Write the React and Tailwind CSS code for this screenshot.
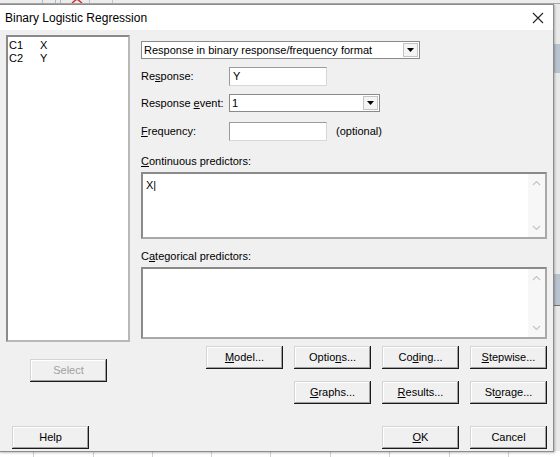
const font = "font-['Liberation_Sans',Arial,sans-serif]";

const raised =
  "shadow-[inset_-1px_-1px_#1a1a1a,inset_1px_1px_#d4d4d4,inset_-2px_-2px_#a0a0a0,inset_2px_2px_#ffffff]";

function Button({ children, disabled, className = "" }) {
  return (
    <div
      className={`flex h-[23px] w-[77px] items-center justify-center bg-[#f0f0f0] text-[11px] ${raised} ${
        disabled ? "text-[#a0a0a0]" : "text-black"
      } ${className}`}
    >
      {children}
    </div>
  );
}

function Arrow() {
  return (
    <div className="flex h-[14px] w-[15px] items-center justify-center border border-[#c4c4c4] bg-[#f4f4f4]">
      <svg width="7" height="4" viewBox="0 0 7 4">
        <path d="M0 0h7L3.5 4z" fill="#000" />
      </svg>
    </div>
  );
}

function Combo({ value, width }) {
  return (
    <div
      className={`flex h-[18px] items-center justify-between border border-[#8a8a8a] bg-white pl-[2px] pr-[1px] text-[11px] ${width}`}
    >
      <span>{value}</span>
      <Arrow />
    </div>
  );
}

function TextBox({ value }) {
  return (
    <div className="flex h-[19px] w-[98px] items-center border border-[#9a9a9a] border-b-[#d8d8d8] border-r-[#d8d8d8] bg-white pl-[3px] text-[11px]">
      {value}
    </div>
  );
}

function Chevron({ up }) {
  return (
    <svg width="9" height="6" viewBox="0 0 9 6">
      <path
        d={up ? "M1 5l3.5-3.5L8 5" : "M1 1l3.5 3.5L8 1"}
        fill="none"
        stroke="#c4c4c4"
        strokeWidth="1.2"
      />
    </svg>
  );
}

function Area({ height, children }) {
  return (
    <div
      className={`flex border-2 border-[#8a8a8a] border-b-[#a8a8a8] border-r-[#a8a8a8] bg-white ${height}`}
    >
      <div className="flex-1 pl-[3px] pt-[3px] text-[11px]">{children}</div>
      <div className="flex w-[17px] flex-col items-center justify-between bg-[#f7f7f7] py-[6px]">
        <Chevron up />
        <Chevron />
      </div>
    </div>
  );
}

function Row({ label, children }) {
  return (
    <div className="flex items-center">
      <div className="w-[88px] text-[11px]">{label}</div>
      {children}
    </div>
  );
}

export default function App() {
  return (
    <div className={`relative h-[457px] w-[560px] overflow-hidden bg-[#e9e9e9] ${font}`}>
      {/* toolbar remnants above the dialog */}
      <div className="absolute left-0 top-0 flex h-[4px] w-full items-end border-b border-[#a8a8a8] bg-[#ececec]">
        <div className="ml-[42px] h-[4px] w-[14px] border-x border-[#b8b8b8]" />
        <div className="ml-[4px] h-[4px] w-px bg-[#b8b8b8]" />
        <svg className="ml-[10px]" width="12" height="4" viewBox="0 0 12 4">
          <path d="M1 4l5-4 5 4" fill="none" stroke="#d83030" strokeWidth="1.5" />
        </svg>
        <div className="ml-[6px] h-[4px] w-[24px] border-x border-[#c4c4c4]" />
      </div>

      {/* worksheet remnants on the right */}
      <div className="absolute right-0 top-[44px] h-[29px] w-[7px] bg-[#b9c3cf]" />
      <div className="absolute right-0 top-[274px] h-[31px] w-[7px] bg-[#b9c3cf]" />
      <div className="absolute right-0 top-[305px] h-px w-[7px] bg-[#707070]" />
      <div className="absolute bottom-0 left-0 flex h-[6px] w-full bg-white">
        {[33, 93, 152, 211, 270, 330, 389, 449, 508].map((x) => (
          <div key={x} className="absolute top-0 h-[6px] w-px bg-[#d0d0d0]" style={{ left: x }} />
        ))}
      </div>

      {/* dialog window */}
      <div className="absolute left-[-1px] top-[4px] flex h-[448px] w-[555px] flex-col border border-[#8c8c8c] bg-[#f0f0f0] shadow-[1px_1px_2px_rgba(0,0,0,0.25)]">
        <div className="flex h-[25px] items-center justify-between bg-white pl-[5px] pr-[9px]">
          <span className="text-[12px] text-black">Binary Logistic Regression</span>
          <svg width="12" height="12" viewBox="0 0 12 12">
            <path d="M1 1l10 10M11 1L1 11" stroke="#222" strokeWidth="1.1" />
          </svg>
        </div>

        <div className="flex flex-col pl-[6px] pr-[6px] text-black">
          <div className="flex">
            {/* column list */}
            <div className="flex w-[124px] flex-col pt-[5px]">
              <div className="h-[307px] border-2 border-[#8a8a8a] border-b-[#b8b8b8] border-r-[#b8b8b8] bg-white pl-[1px] pt-[2px] text-[11px] leading-[13px]">
                <div className="flex">
                  <span className="w-[31px]">C1</span>
                  <span>X</span>
                </div>
                <div className="flex">
                  <span className="w-[31px]">C2</span>
                  <span>Y</span>
                </div>
              </div>
              <Button disabled className="ml-[24px] mt-[17px]">
                Select
              </Button>
            </div>

            {/* fields */}
            <div className="ml-[11px] flex w-[406px] flex-col pt-[11px]">
              <Combo value="Response in binary response/frequency format" width="w-[279px]" />
              <div className="mt-[8px]">
                <Row label={<>Re<u>s</u>ponse:</>}>
                  <TextBox value="Y" />
                </Row>
              </div>
              <div className="mt-[8px]">
                <Row label={<>Response <u>e</u>vent:</>}>
                  <Combo value="1" width="w-[151px]" />
                </Row>
              </div>
              <div className="mt-[10px]">
                <Row label={<><u>F</u>requency:</>}>
                  <TextBox value="" />
                  <span className="ml-[9px] text-[11px]">(optional)</span>
                </Row>
              </div>
              <div className="mt-[12px] h-[14px] text-[11px]">
                <u>C</u>ontinuous predictors:
              </div>
              <div className="mt-[5px]">
                <Area height="h-[67px]">X|</Area>
              </div>
              <div className="mt-[9px] h-[14px] text-[11px]">
                C<u>a</u>tegorical predictors:
              </div>
              <div className="mt-[5px]">
                <Area height="h-[72px]" />
              </div>
              <div className="mt-[7px] flex justify-end gap-[11px]">
                <Button>
                  <u>M</u>odel...
                </Button>
                <Button>
                  Optio<u>n</u>s...
                </Button>
                <Button>
                  Co<u>d</u>ing...
                </Button>
                <Button>
                  <u>S</u>tepwise...
                </Button>
              </div>
              <div className="mt-[12px] flex justify-end gap-[11px]">
                <Button>
                  <u>G</u>raphs...
                </Button>
                <Button>
                  <u>R</u>esults...
                </Button>
                <Button>
                  St<u>o</u>rage...
                </Button>
              </div>
            </div>
          </div>

          <div className="mt-[22px] flex items-center justify-between">
            <Button className="ml-[6px]">Help</Button>
            <div className="flex gap-[11px]">
              <Button>
                <u>O</u>K
              </Button>
              <Button>Cancel</Button>
            </div>
          </div>
        </div>
      </div>
    </div>
  );
}
